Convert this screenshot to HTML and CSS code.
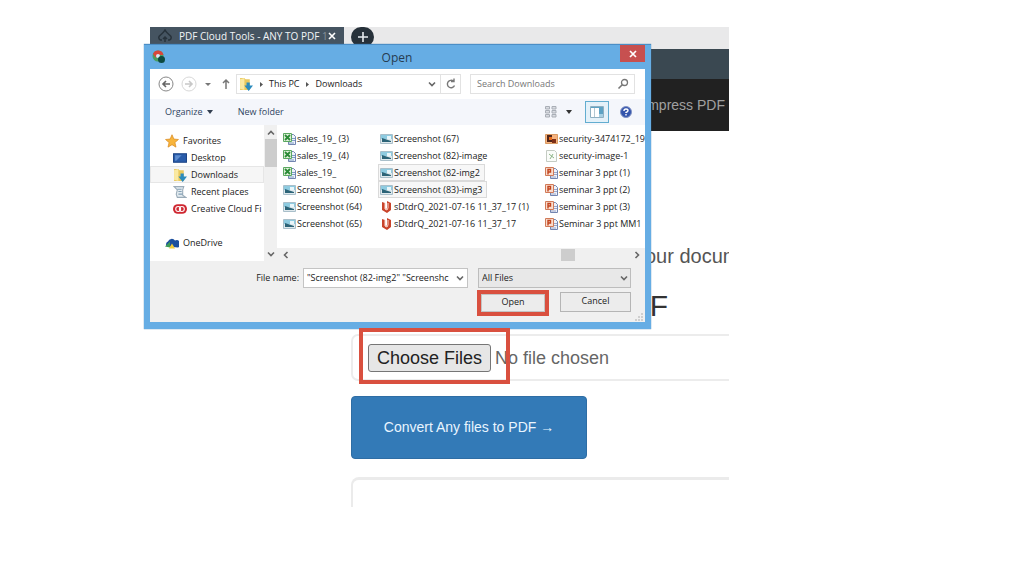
FILE: index.html
```html
<!DOCTYPE html>
<html lang="en">
<head>
<meta charset="utf-8">
<title>PDF Cloud Tools - ANY TO PDF</title>
<link rel="stylesheet" href="styles.css">
</head>
<body>
<svg class="sprite" aria-hidden="true">
  <symbol id="picture" viewBox="0 0 13 12"><path fill="#dfe9ed" stroke="#a9bfca" d="M.5 1.500h12v9H.5z"/><path fill="#8ecbe0" d="M1 2h11v4H1z"/><path fill="#2c6478" d="M2 5l3 1 3 1 3 1v1H2z"/><path fill="#e9f6fa" d="M7 3h4v3H7z"/></symbol>
  <symbol id="excel" viewBox="0 0 13 12"><path fill="#eef2fa" stroke="#7385b0" d="M5.500 1.500h5l2 2v8h-7z"/><path stroke="#7d9cc4" d="M9 5.500h3M9 7.500h3M6 10h5"/><path fill="#dff0da" stroke="#5ba860" d="M.5.5h8v8h-8z"/><path stroke="#2b8a36" stroke-width="1.800" d="M2 2l5 5M7 2L2 7"/></symbol>
  <symbol id="ppt" viewBox="0 0 13 12"><path fill="#eef2fa" stroke="#7385b0" d="M5.500 1.500h5l2 2v8h-7z"/><path stroke="#9aa6c8" d="M9 5.500h3M9 7.500h3M6 10h5"/><path fill="#f9dccd" stroke="#d07a58" d="M.5.5h8v8h-8z"/><path fill="none" stroke="#c2431d" stroke-width="1.400" d="M3 7.500v-5h2.500v2.500H3"/></symbol>
  <symbol id="sd" viewBox="0 0 13 12"><path fill="#c9432a" d="M2 1l3 1v5l1 2 1-2V0l4 2v7l-4 3-5-3z"/><path fill="none" stroke="#fbd7cc" d="M5 2v6l2 1 1-2V2"/></symbol>
  <symbol id="dark" viewBox="0 0 13 12"><path fill="#f6b27d" stroke="#d99a63" d="M.5 1.500h12v9H.5z"/><path fill="#51261b" d="M2 2h5v7H2z"/><path fill="#e96c1b" d="M4 4h3v3H4z"/><path fill="#7e2f16" d="M7 6h4v4H7z"/></symbol>
  <symbol id="page" viewBox="0 0 13 12"><path fill="#fafcf9" stroke="#c4cbc3" d="M1.500.5h8l2 2v9h-10z"/><path stroke="#8db488" d="M4 4l5 4M8 4L5 9"/></symbol>
  <symbol id="folder" viewBox="0 0 13 13"><path fill="#e9c85e" d="M1 1h4l1 1h4v10H1z"/><path fill="#fae9a3" d="M1 2l4-1v11l-4-1z"/><path fill="#2b8bbd" d="M7 5h3v3h3l-4 5-4-5h2z"/></symbol>
  <symbol id="star" viewBox="0 0 13 13"><path fill="#f8b53c" stroke="#d98c24" stroke-width=".7" d="M6.500.7l1.700 4 4.300.4-3.300 2.800 1 4.300-3.700-2.300-3.700 2.300 1-4.300L.5 5.100l4.300-.4z"/></symbol>
  <symbol id="desktop" viewBox="0 0 13 13"><path fill="#2a5caa" stroke="#1e4687" d="M.5 2.500h12v8H.5z"/><path fill="#5d8dd0" d="M2 4h6L3 9H2z"/></symbol>
  <symbol id="recent" viewBox="0 0 13 13"><path fill="#e3ebf0" stroke="#9aabb8" d="M1 1.500h9l-1 3v5l3 2H4l-1-3 1-4z"/><path stroke="#83a0b4" d="M4 4h4M5 6h3M5 8.500h4"/></symbol>
  <symbol id="creative" viewBox="0 0 13 13"><rect y="2" width="13" height="9" rx="4.500" fill="#cf2731"/><circle cx="4.800" cy="6.500" r="2.300" fill="none" stroke="#fff"/><circle cx="8.200" cy="6.500" r="2.300" fill="none" stroke="#fff"/></symbol>
  <symbol id="onedrive" viewBox="0 0 14 13"><path fill="#1c4f9e" d="M2 10a3 3 0 0 1 1-5 4 4 0 0 1 7-1 3.500 3.500 0 0 1 3 7z"/><path fill="#3c9b58" d="M0 10l5-5v6z"/><path fill="#f2cd3a" d="M4 12l3-5 3 5z"/></symbol>
  <symbol id="down" viewBox="0 0 8 8"><path fill="none" stroke="#666" stroke-width="1.600" d="M1 2.500l3 3 3-3"/></symbol>
</svg>

<div class="screen">
  <div class="page">
    <header>
      <div class="tabs">
        <div class="tab">
          <svg class="i14" viewBox="0 0 14 14"><path fill="none" stroke="#27323b" stroke-width="1.500" d="M4 11H2.500A2.500 2.500 0 0 1 2 6.500Q6 3 7 1q1 2 5 5.500a2.500 2.500 0 0 1-.5 4.500H10M7 13V8M5 10l2-2 2 2"/></svg>
          <span class="tab-title">PDF Cloud Tools - ANY TO PDF <span class="faded">1</span></span>
          <button class="tab-close" aria-label="Close tab"><svg viewBox="0 0 8 8"><path stroke="#fff" stroke-width="1.600" d="M1 1l6 6M7 1L1 7"/></svg></button>
        </div>
        <button class="tab-new" aria-label="New tab"><svg viewBox="0 0 12 12"><path stroke="#e8ecef" stroke-width="1.600" d="M6 1v10M1 6h10"/></svg></button>
      </div>
      <div class="strip"></div>
      <nav class="menu"><a href="#">Compress PDF</a></nav>
    </header>
    <main>
      <p class="lead">your documents</p>
      <h1>PDF</h1>
      <div class="file-box"><input type="file" multiple aria-label="Choose files"></div>
      <button class="convert">Convert Any files to PDF →</button>
      <section class="card"></section>
    </main>
  </div>

  <div class="dialog" role="dialog" aria-labelledby="dialog-title">
    <div class="title-bar">
      <svg class="i14" viewBox="0 0 14 14"><circle cx="6" cy="6" r="5.500" fill="#4a9e60"/><path fill="#d8463a" d="M1 4a5.500 5.500 0 0 1 10.500 1H6L4 8z"/><circle cx="6" cy="6" r="2" fill="#d9e9f7"/><circle cx="9.500" cy="9.500" r="3.500" fill="#0d4a41"/></svg>
      <h2 id="dialog-title">Open</h2>
      <button class="close" aria-label="Close"><svg viewBox="0 0 8 8"><path stroke="#fff" stroke-width="1.700" d="M1 1l6 6M7 1L1 7"/></svg></button>
    </div>
    <div class="body">
      <div class="nav-row">
        <button class="plain" aria-label="Back"><svg class="i16" viewBox="0 0 16 16"><circle cx="8" cy="8" r="7" fill="none" stroke="#888"/><path fill="none" stroke="#666" stroke-width="1.600" d="M12 8H5M8 5L5 8l3 3"/></svg></button>
        <button class="plain" aria-label="Forward"><svg class="i16" viewBox="0 0 16 16"><circle cx="8" cy="8" r="7" fill="none" stroke="#d8d8d8"/><path fill="none" stroke="#c8c8c8" stroke-width="1.600" d="M4 8h7M8 5l3 3-3 3"/></svg></button>
        <button class="plain" aria-label="History"><svg class="i8" viewBox="0 0 8 8"><path fill="#777" d="M1 3h6L4 6z"/></svg></button>
        <button class="plain up" aria-label="Up"><svg class="i12" viewBox="0 0 12 12"><path fill="none" stroke="#777" stroke-width="1.500" d="M6 11V2M3 5l3-3 3 3"/></svg></button>
        <div class="address">
          <svg class="i14"><use href="#folder"/></svg>
          <svg class="i8" viewBox="0 0 8 8"><path fill="#555" d="M3 2l3 2.500L3 7z"/></svg>
          <span>This PC</span>
          <svg class="i8" viewBox="0 0 8 8"><path fill="#555" d="M3 2l3 2.500L3 7z"/></svg>
          <span>Downloads</span>
          <svg class="i8 push"><use href="#down"/></svg>
          <button class="refresh" aria-label="Refresh"><svg class="i12" viewBox="0 0 12 12"><path fill="none" stroke="#777" stroke-width="1.400" d="M9.500 7.500a3.700 3.700 0 1 1-1-4.300M6 3.500h3V.5"/></svg></button>
        </div>
        <div class="search">
          <input type="search" placeholder="Search Downloads" aria-label="Search Downloads">
          <svg class="i12" viewBox="0 0 12 12"><circle cx="7.500" cy="4.500" r="3" fill="none" stroke="#777" stroke-width="1.300"/><path stroke="#777" stroke-width="1.600" d="M5.300 6.700L1.500 10.500"/></svg>
        </div>
      </div>
      <div class="toolbar">
        <button class="plain organize">Organize <svg class="i8" viewBox="0 0 8 8"><path fill="#333f50" d="M1 2h6L4 6z"/></svg></button>
        <button class="plain">New folder</button>
        <button class="plain views" aria-label="Change view"><svg class="i12" viewBox="0 0 12 12"><path fill="#d9dce2" stroke="#a9aeb6" d="M.5.5h4v2.500h-4zM7 .5h4V3H7zM.5 4.500h4V7h-4zM7 4.500h4V7H7zM.5 8.500h4V11h-4zM7 8.500h4V11H7z"/></svg><svg class="i8" viewBox="0 0 8 8"><path fill="#333" d="M1 2h6L4 6z"/></svg></button>
        <button class="preview" aria-label="Preview pane"><svg class="i14" viewBox="0 0 14 14"><path fill="#fff" stroke="#8fb0c2" d="M.5 1.500h13v11H.5z"/><path fill="#5da2c4" d="M9 3h4v6H9zM1 2h12v1H1z"/><path fill="#a6d0e4" d="M9 9h4v3H9z"/><path stroke="#b5c8d2" d="M4.500 3v9"/></svg></button>
        <button class="plain" aria-label="Help"><svg class="i12" viewBox="0 0 12 12"><circle cx="6" cy="6" r="5.500" fill="#3354ac" stroke="#8293c4"/><path fill="none" stroke="#fff" stroke-width="1.400" d="M4 5q0-2 2-2t2 1.700Q8 5.500 6 6.500V7M6 8v1.500"/></svg></button>
      </div>
      <div class="browser">
        <ul class="places">
          <li class="root"><svg class="i14"><use href="#star"/></svg>Favorites</li>
          <li><svg class="i14"><use href="#desktop"/></svg>Desktop</li>
          <li class="current"><svg class="i14"><use href="#folder"/></svg>Downloads</li>
          <li><svg class="i14"><use href="#recent"/></svg>Recent places</li>
          <li><svg class="i14"><use href="#creative"/></svg>Creative Cloud Fi</li>
          <li class="root gap"><svg class="i14"><use href="#onedrive"/></svg>OneDrive</li>
        </ul>
        <div class="vscroll">
          <svg class="i8" viewBox="0 0 8 8"><path fill="none" stroke="#666" stroke-width="1.600" d="M1 5.500l3-3 3 3"/></svg>
          <div class="vthumb"></div>
          <svg class="i8"><use href="#down"/></svg>
        </div>
        <div class="pane">
          <ul class="files">
            <li><svg><use href="#excel"/></svg>sales_19_ (3)</li>
            <li><svg><use href="#excel"/></svg>sales_19_ (4)</li>
            <li><svg><use href="#excel"/></svg>sales_19_</li>
            <li><svg><use href="#picture"/></svg>Screenshot (60)</li>
            <li><svg><use href="#picture"/></svg>Screenshot (64)</li>
            <li><svg><use href="#picture"/></svg>Screenshot (65)</li>
            <li><svg><use href="#picture"/></svg>Screenshot (67)</li>
            <li><svg><use href="#picture"/></svg>Screenshot (82)-image</li>
            <li class="selected"><svg><use href="#picture"/></svg>Screenshot (82-img2</li>
            <li class="selected"><svg><use href="#picture"/></svg>Screenshot (83)-img3</li>
            <li><svg><use href="#sd"/></svg>sDtdrQ_2021-07-16 11_37_17 (1)</li>
            <li><svg><use href="#sd"/></svg>sDtdrQ_2021-07-16 11_37_17</li>
            <li><svg><use href="#dark"/></svg>security-3474172_19</li>
            <li><svg><use href="#page"/></svg>security-image-1</li>
            <li><svg><use href="#ppt"/></svg>seminar 3 ppt (1)</li>
            <li><svg><use href="#ppt"/></svg>seminar 3 ppt (2)</li>
            <li><svg><use href="#ppt"/></svg>seminar 3 ppt (3)</li>
            <li><svg><use href="#ppt"/></svg>Seminar 3 ppt MM1</li>
          </ul>
          <div class="hscroll">
            <svg class="i8" viewBox="0 0 8 8"><path fill="none" stroke="#666" stroke-width="1.600" d="M5.500 1l-3 3 3 3"/></svg>
            <div class="hthumb"></div>
            <svg class="i8" viewBox="0 0 8 8"><path fill="none" stroke="#666" stroke-width="1.600" d="M2.500 1l3 3-3 3"/></svg>
          </div>
        </div>
      </div>
      <div class="footer">
        <div class="field-row">
          <label for="file-name">File name:</label>
          <div class="combo">
            <input id="file-name" type="text" value="&quot;Screenshot (82-img2&quot; &quot;Screenshc">
            <svg class="i8"><use href="#down"/></svg>
          </div>
          <div class="filter">
            <select aria-label="File type"><option>All Files</option></select>
            <svg class="i8"><use href="#down"/></svg>
          </div>
        </div>
        <div class="actions">
          <div class="marked"><button class="action">Open</button></div>
          <button class="action cancel">Cancel</button>
        </div>
        <svg class="grip" viewBox="0 0 8 8"><path fill="#cfcfcf" d="M6 0h2v2H6zM3 3h2v2H3zM6 3h2v2H6zM0 6h2v2H0zM3 6h2v2H3zM6 6h2v2H6z"/></svg>
      </div>
    </div>
  </div>
  <div class="mark-choose"></div>
</div>
</body>
</html>
```
FILE: styles.css
```css
* { box-sizing: border-box; }
body { margin: 0; padding: 27px 295px 0 150px; background: #fff; font-family: "Liberation Sans", Arial, sans-serif; }
button, input, select { font: inherit; color: inherit; margin: 0; }
ul { list-style: none; margin: 0; padding: 0; }
svg { display: block; flex: none; }
.sprite { position: absolute; width: 0; height: 0; }
.i8 { width: 8px; height: 8px; }
.i12 { width: 12px; height: 12px; }
.i14 { width: 14px; height: 14px; }
.i16 { width: 16px; height: 16px; }

.screen { position: relative; }
.page { overflow: hidden; }

.tabs { display: flex; align-items: flex-start; gap: 7px; height: 22px; background: #e9e9ea; }
.tab { display: flex; align-items: center; width: 194px; height: 18px; padding: 0 8px; background: #455461; color: #f2f5f7; font: 10px "Open Sans", sans-serif; }
.tab-title { margin-left: 7px; white-space: nowrap; }
.faded { color: #85919b; }
.tab-close { width: 8px; height: 8px; margin-left: auto; padding: 0; border: 0; background: none; }
.tab-new { display: grid; place-items: center; width: 23px; height: 20px; padding: 0; border: 0; border-radius: 10px; background: #27313a; }
.tab-new svg { width: 12px; height: 12px; }
.strip { height: 30px; background: #3a4851; }
.menu { display: flex; justify-content: flex-end; align-items: center; height: 52px; padding-right: 4px; background: #212121; }
.menu a { color: #a0a0a0; font-size: 14px; text-decoration: none; }

main { padding: 113px 0 0 201px; }
.lead { margin: 0; padding-left: 284px; color: #555; font-size: 20px; line-height: 24px; white-space: nowrap; }
h1 { margin: 20px 0 10px; padding-left: 257px; color: #333; font-size: 30px; font-weight: 400; line-height: 36px; }
.file-box { height: 47px; margin-right: -8px; padding: 8px 15px; border: 2px solid #ececec; border-radius: 7px; }
.file-box input { display: block; width: 100%; color: #666; font-size: 18px; line-height: 26px; }
.file-box input::file-selector-button { height: 28px; margin: 0 4px 0 0; padding: 0 8px; border: 1px solid #767676; border-radius: 3px; background: #e6e6e6; color: #222; font: inherit; }
.convert { display: block; width: 236px; height: 63px; margin: 15px 0 18px; padding: 0 6px 2px; border: 1px solid #2e6da4; border-radius: 4px; background: #337ab7; color: #e9f5ff; font-size: 14px; }
.card { height: 30px; margin-right: -8px; border: solid #ebebeb; border-width: 3px 0 0 2px; border-radius: 8px 0 0 0; }

.dialog { position: absolute; top: 17px; left: -6px; width: 507px; padding: 0 6px 7px; border: solid #4b8ec6; border-width: 1px 0 0; background: #66ade4; box-shadow: 0 0 1px #3f7fb4; color: #222; font: 9px/12px "Open Sans", "Noto Sans", sans-serif; }
.title-bar { display: grid; grid-template-columns: 1fr auto 1fr; align-items: center; height: 24px; padding-left: 2px; }
.title-bar h2 { margin: 2px 3px 0 0; color: #263c50; font-size: 12px; font-weight: 400; }
.close { display: grid; place-items: center; justify-self: end; align-self: start; width: 25px; height: 17px; padding: 0; border: 0; background: #c75050; }
.close svg, .tab-close svg { width: 8px; height: 8px; }
.body { background: #fff; }
.plain { display: flex; align-items: center; gap: 3px; padding: 0; border: 0; background: none; }

.nav-row { display: flex; align-items: center; height: 30px; padding: 0 10px 0 8px; gap: 7px; }
.up { margin: 0 -3px 0 1px; }
.address { display: flex; flex: 1; align-items: center; gap: 4px; height: 20px; padding-left: 2px; border: 1px solid #e2e2e2; }
.push { margin-left: auto; }
.refresh { display: grid; place-items: center; align-self: stretch; width: 20px; padding: 0; border: 0; border-left: 1px solid #e2e2e2; background: none; }
.search { display: flex; align-items: center; width: 165px; height: 20px; margin-left: 2px; padding: 0 5px 0 6px; border: 1px solid #e2e2e2; }
.search input { flex: 1; min-width: 0; padding: 0; border: 0; outline: 0; background: none; }
.search input::placeholder { color: #777; }

.toolbar { display: flex; align-items: center; height: 26px; padding: 0 13px 0 15px; background: #f4f6fb; color: #30445f; }
.organize { margin-right: 24px; }
.views { gap: 8px; margin-left: auto; }
.preview { display: grid; place-items: center; width: 24px; height: 22px; margin: 0 11px 0 12px; padding: 0; border: 1px solid #62add0; background: #e4f1f9; }

.browser { display: flex; height: 136px; }
.places { width: 114px; padding-top: 7px; overflow: hidden; }
.places li { display: flex; align-items: center; gap: 4px; height: 17px; padding-left: 23px; white-space: nowrap; }
.places .root { padding-left: 15px; }
.places .gap { margin-top: 17px; }
.places .current { border: 1px solid #e6e6e6; background: #f6f6f6; padding-left: 22px; }
.vscroll { display: flex; flex-direction: column; align-items: center; width: 13px; padding: 4px 0 3px; background: #f0f0f0; }
.vthumb { width: 12px; height: 28px; margin: 2px 0 auto; background: #cdcdcd; }
.pane { display: flex; flex: 1; flex-direction: column; min-width: 0; }
.files { display: grid; flex: 1; grid-template-rows: repeat(6, 17px); grid-template-columns: 97px 165px 1fr; grid-auto-flow: column; padding: 5px 0 0 4px; overflow: hidden; }
.files li { display: flex; align-items: center; justify-self: start; gap: 1px; padding: 0 4px 0 1px; border: 1px solid transparent; white-space: nowrap; }
.files svg { width: 13px; height: 12px; }
.files .selected { border-color: #dadada; background: #f7f7f7; }
.hscroll { display: flex; align-items: center; height: 13px; padding: 0 4px 0 5px; background: #f0f0f0; }
.hthumb { width: 14px; height: 12px; margin: 0 58px 0 auto; background: #cdcdcd; }

.footer { position: relative; padding: 7px 14px 6px; background: #f0f0f0; }
.field-row { display: flex; align-items: center; justify-content: flex-end; }
.combo { display: flex; align-items: center; width: 165px; height: 20px; margin: 0 10px 0 4px; padding: 0 3px 0 3px; border: 1px solid #c4c4c4; background: #fff; }
.combo input { flex: 1; min-width: 0; padding: 0; border: 0; outline: 0; background: none; }
.filter { display: grid; align-items: center; width: 153px; }
.filter select { grid-area: 1 / 1; height: 20px; padding: 0 3px; border: 1px solid #bdbdbd; border-radius: 0; background: #e8e8e8; appearance: none; }
.filter svg { grid-area: 1 / 1; justify-self: end; margin-right: 3px; pointer-events: none; }
.actions { display: flex; align-items: center; justify-content: flex-end; gap: 11px; margin-top: 2px; }
.marked { border: 4px solid #d9503f; }
.action { display: block; width: 64px; height: 18px; padding: 0 0 2px; border: 1px solid #c4c4c4; background: #ececec; }
.cancel { width: 71px; height: 20px; margin-bottom: 2px; border-color: #b5b5b5; }
.grip { position: absolute; right: 2px; bottom: 1px; width: 8px; height: 8px; }
.mark-choose { position: absolute; top: 301px; left: 209px; width: 151px; height: 56px; border: 4px solid #d9503f; }
```
